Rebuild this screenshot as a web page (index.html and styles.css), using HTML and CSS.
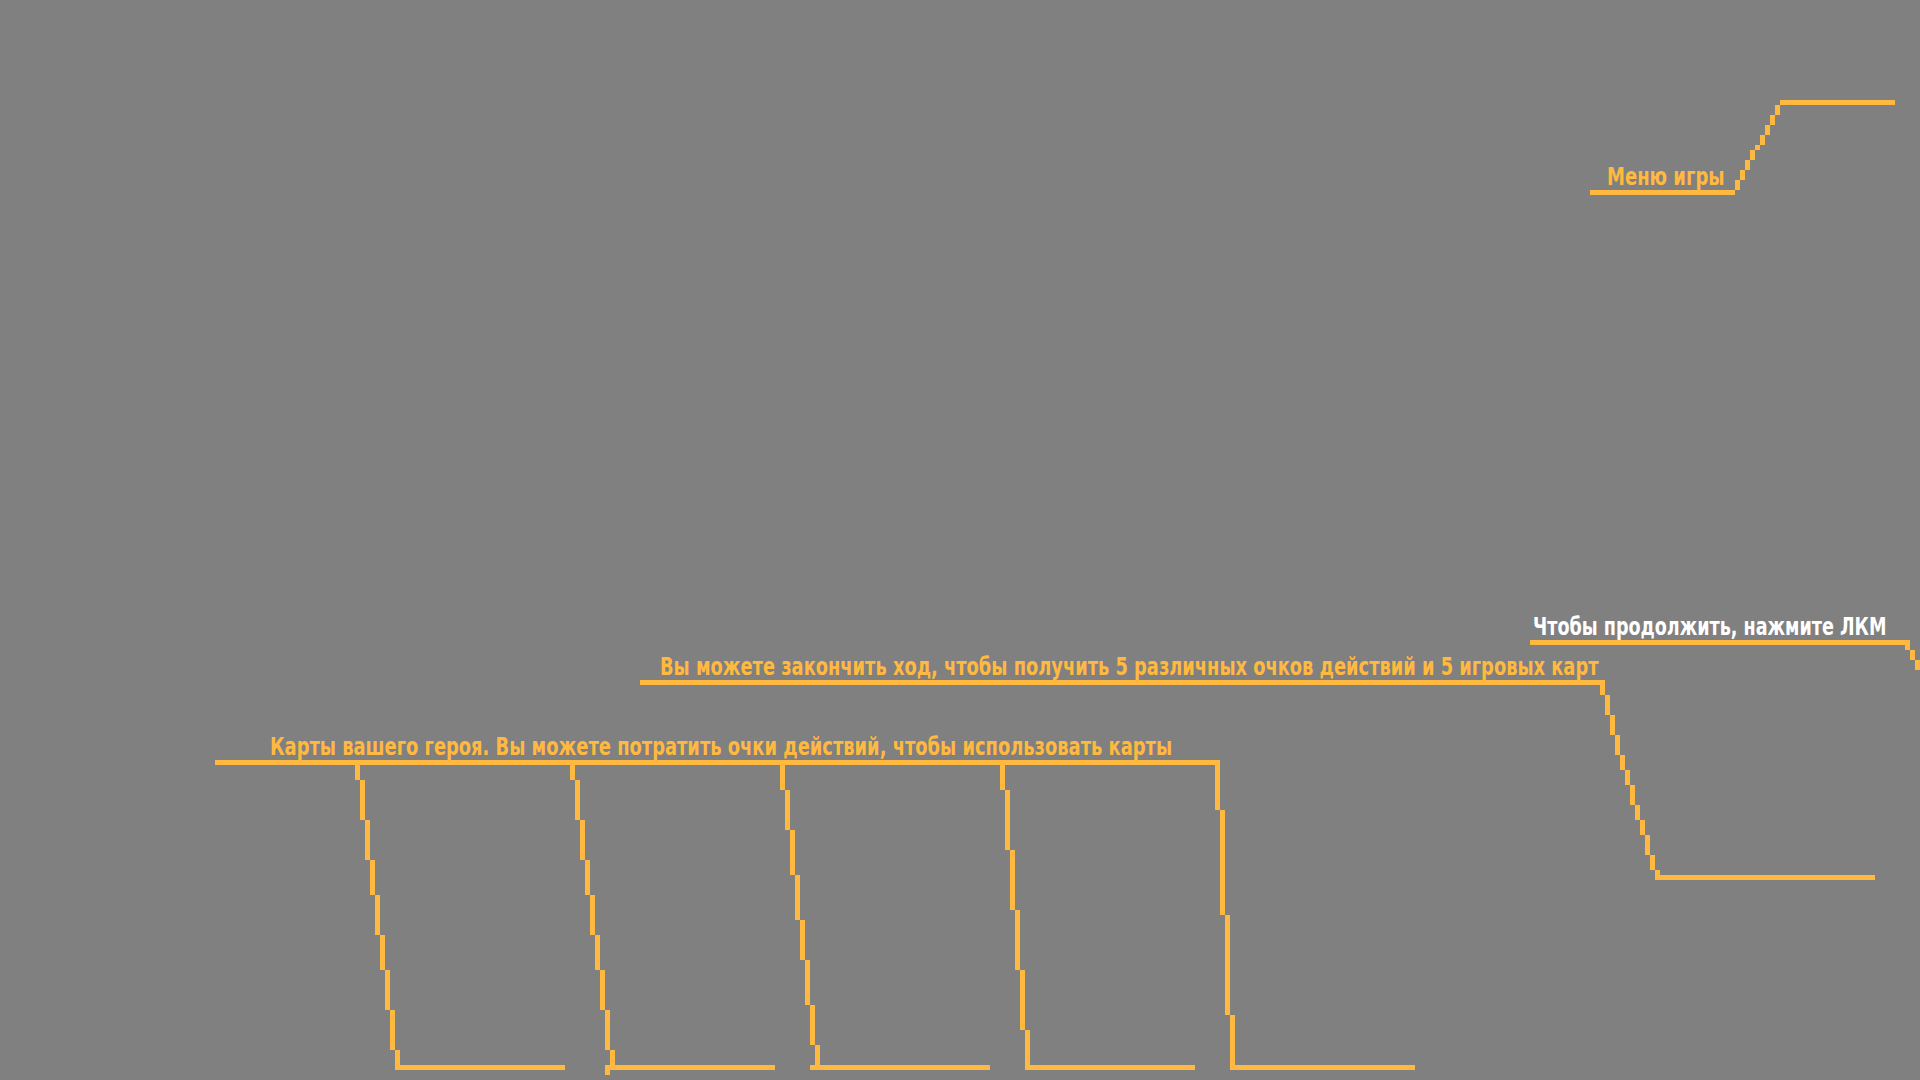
FILE: index.html
```html
<!DOCTYPE html>
<html lang="ru">
<head>
<meta charset="utf-8">
<title>Обучение</title>
<link rel="stylesheet" href="styles.css">
</head>
<body>
<main class="stage">
  <svg class="wires" width="1920" height="1080" viewBox="0 0 1920 1080" xmlns="http://www.w3.org/2000/svg">
    <g class="wire">
      <!-- menu -->
      <rect x="1780" y="100" width="115" height="5"/>
      <rect x="1775" y="105" width="5" height="10"/>
      <rect x="1770" y="115" width="5" height="10"/>
      <rect x="1765" y="125" width="5" height="10"/>
      <rect x="1760" y="135" width="5" height="10"/>
      <rect x="1755" y="145" width="5" height="5"/>
      <rect x="1750" y="150" width="5" height="10"/>
      <rect x="1745" y="160" width="5" height="10"/>
      <rect x="1740" y="170" width="5" height="10"/>
      <rect x="1735" y="180" width="5" height="10"/>
      <rect x="1590" y="190" width="145" height="5"/>
      <!-- continue -->
      <rect x="1530" y="640" width="375" height="5"/>
      <rect x="1905" y="640" width="5" height="10"/>
      <rect x="1910" y="650" width="5" height="10"/>
      <rect x="1915" y="660" width="5" height="10"/>
      <!-- end turn -->
      <rect x="640" y="680" width="965" height="5"/>
      <rect x="1600" y="680" width="5" height="15"/>
      <rect x="1605" y="695" width="5" height="20"/>
      <rect x="1610" y="715" width="5" height="20"/>
      <rect x="1615" y="735" width="5" height="20"/>
      <rect x="1620" y="755" width="5" height="15"/>
      <rect x="1625" y="770" width="5" height="15"/>
      <rect x="1630" y="785" width="5" height="20"/>
      <rect x="1635" y="805" width="5" height="15"/>
      <rect x="1640" y="820" width="5" height="15"/>
      <rect x="1645" y="835" width="5" height="20"/>
      <rect x="1650" y="855" width="5" height="15"/>
      <rect x="1655" y="870" width="5" height="10"/>
      <rect x="1655" y="875" width="220" height="5"/>
      <!-- hero cards -->
      <rect x="215" y="760" width="1005" height="5"/>
      <rect x="355" y="765" width="5" height="15"/>
      <rect x="360" y="780" width="5" height="40"/>
      <rect x="365" y="820" width="5" height="40"/>
      <rect x="370" y="860" width="5" height="35"/>
      <rect x="375" y="895" width="5" height="40"/>
      <rect x="380" y="935" width="5" height="35"/>
      <rect x="385" y="970" width="5" height="40"/>
      <rect x="390" y="1010" width="5" height="40"/>
      <rect x="395" y="1050" width="5" height="20"/>
      <rect x="395" y="1065" width="170" height="5"/>

      <rect x="570" y="765" width="5" height="15"/>
      <rect x="575" y="780" width="5" height="40"/>
      <rect x="580" y="820" width="5" height="40"/>
      <rect x="585" y="860" width="5" height="35"/>
      <rect x="590" y="895" width="5" height="40"/>
      <rect x="595" y="935" width="5" height="35"/>
      <rect x="600" y="970" width="5" height="40"/>
      <rect x="605" y="1010" width="5" height="40"/>
      <rect x="610" y="1050" width="5" height="15"/>
      <rect x="605" y="1065" width="5" height="10"/>
      <rect x="610" y="1065" width="165" height="5"/>

      <rect x="780" y="765" width="5" height="25"/>
      <rect x="785" y="790" width="5" height="40"/>
      <rect x="790" y="830" width="5" height="45"/>
      <rect x="795" y="875" width="5" height="45"/>
      <rect x="800" y="920" width="5" height="40"/>
      <rect x="805" y="960" width="5" height="45"/>
      <rect x="810" y="1005" width="5" height="40"/>
      <rect x="815" y="1045" width="5" height="25"/>
      <rect x="810" y="1065" width="180" height="5"/>

      <rect x="1000" y="765" width="5" height="25"/>
      <rect x="1005" y="790" width="5" height="60"/>
      <rect x="1010" y="850" width="5" height="60"/>
      <rect x="1015" y="910" width="5" height="60"/>
      <rect x="1020" y="970" width="5" height="60"/>
      <rect x="1025" y="1030" width="5" height="40"/>
      <rect x="1025" y="1065" width="170" height="5"/>

      <rect x="1215" y="765" width="5" height="45"/>
      <rect x="1220" y="810" width="5" height="105"/>
      <rect x="1225" y="915" width="5" height="100"/>
      <rect x="1230" y="1015" width="5" height="55"/>
      <rect x="1230" y="1065" width="185" height="5"/>
    </g>
  </svg>

  <p class="label label-menu">Меню игры</p>
  <p class="label label-continue">Чтобы продолжить, нажмите ЛКМ</p>
  <p class="label label-endturn">Вы можете закончить ход, чтобы получить 5 различных очков действий и 5 игровых карт</p>
  <p class="label label-cards">Карты вашего героя. Вы можете потратить очки действий, чтобы использовать карты</p>
</main>
</body>
</html>
```
FILE: styles.css
```css
html, body {
  margin: 0;
  padding: 0;
  background: #808080;
}

.stage {
  position: relative;
  width: 1920px;
  height: 1080px;
  overflow: hidden;
  background: #808080;
}

.wires {
  position: absolute;
  left: 0;
  top: 0;
  display: block;
}

.wire {
  fill: #ffb940;
  shape-rendering: crispEdges;
}

.label {
  position: absolute;
  margin: 0;
  font-family: "DejaVu Sans Condensed", "Liberation Sans Narrow", "Liberation Sans", sans-serif;
  font-weight: 700;
  font-size: 24px;
  line-height: 1;
  white-space: nowrap;
  color: #ffb940;
  transform: scaleX(0.828);
  transform-origin: 0 0;
}

.label-menu {
  left: 1607px;
  top: 165px;
  transform: scaleX(0.834);
}

.label-continue {
  left: 1533px;
  top: 615px;
  color: #ffffff;
  transform: scaleX(0.814);
}

.label-endturn {
  left: 660px;
  top: 655px;
  transform: scaleX(0.826);
}

.label-cards {
  left: 270px;
  top: 735px;
}
```
